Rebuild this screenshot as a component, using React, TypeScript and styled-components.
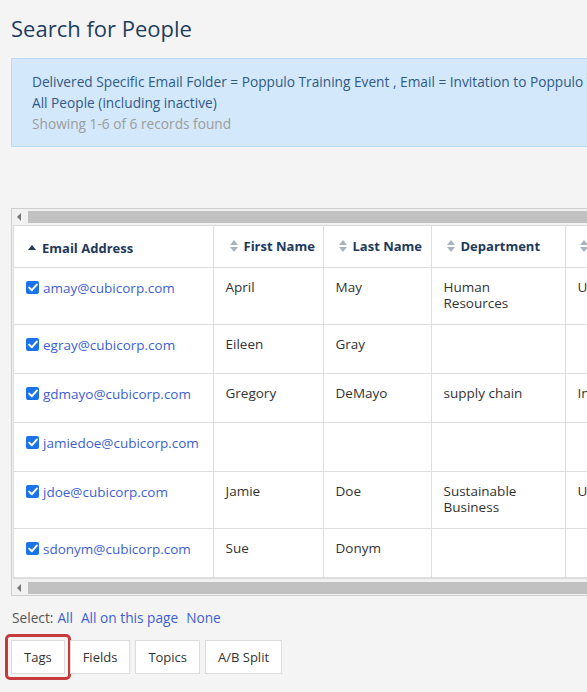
import React from "react";
import styled, { createGlobalStyle } from "styled-components";

const GlobalStyle = createGlobalStyle`
  html, body {
    margin: 0;
    padding: 0;
    background: #f4f4f4;
    overflow: hidden;
  }
  body {
    font-family: "Open Sans", "Noto Sans", sans-serif;
    font-size: 13px;
    color: #333;
  }
`;

const Page = styled.div`
  padding: 13px 0 30px 11px;
  width: 1000px;
`;

const Title = styled.h1`
  margin: 0 0 15px;
  font-size: 22px;
  line-height: 30px;
  font-weight: 400;
  color: #1f3d5e;
`;

const InfoBox = styled.div`
  width: 820px;
  padding: 12px 20px;
  background: #d3e8fb;
  border: 1px solid #b9dcf9;
  line-height: 21px;
  font-size: 13.7px;
  color: #2f5a86;
`;

const InfoMuted = styled.div`
  color: #9c9c9c;
`;

const ScrollArea = styled.div`
  margin-top: 61px;
  width: 880px;
  border: 1px solid #cfcfcf;
  background: #f1f1f1;
`;

const ScrollBar = styled.div`
  height: 15px;
  display: flex;
  align-items: center;
  background: #f1f1f1;
`;

const ScrollArrow = styled.div`
  width: 0;
  height: 0;
  margin: 0 7px 0 5px;
  border-top: 4px solid transparent;
  border-bottom: 4px solid transparent;
  border-right: 4px solid #777;
`;

const ScrollThumb = styled.div`
  flex: 1;
  height: 12px;
  background: #c1c1c1;
`;

const TableFrame = styled.div`
  margin: 1px;
  border: 1px solid #dcdcdc;
  background: #fff;
`;

const Table = styled.table<{ $w: number }>`
  width: ${(p) => p.$w}px;
  border-collapse: collapse;
  table-layout: fixed;
  background: #fff;
`;

const HeadCell = styled.th<{ $pl: number }>`
  height: 41px;
  padding: 0 8px 0 ${(p) => p.$pl}px;
  text-align: left;
  font-weight: 700;
  font-size: 13px;
  color: #1d3a5c;
  border-right: 1px solid #dedede;
  border-bottom: 1px solid #dedede;
  white-space: nowrap;
  overflow: hidden;
`;

const HeadInner = styled.span`
  display: inline-flex;
  align-items: center;
  gap: 6px;
`;

const Row = styled.tr`
  height: 49px;
`;

const Cell = styled.td`
  vertical-align: top;
  padding: 11px 12px 13px 12px;
  line-height: 16px;
  font-size: 13.5px;
  color: #333;
  border-right: 1px solid #dedede;
  border-bottom: 1px solid #dedede;
  overflow: hidden;
  white-space: normal;
`;

const EmailWrap = styled.span`
  display: inline-flex;
  align-items: center;
  gap: 4px;
  white-space: nowrap;
`;

const Check = styled.span`
  display: inline-flex;
  align-items: center;
  justify-content: center;
  width: 13px;
  height: 13px;
  border-radius: 2px;
  background: #1a73e8;
`;

const Link = styled.a`
  color: #3d5fd6;
  text-decoration: none;
  cursor: pointer;
`;

const SelectLine = styled.div`
  margin: 12px 0 0 1px;
  line-height: 20px;
  font-size: 13.7px;
  color: #555;
  display: flex;
  gap: 8px;
`;

const SelectLabel = styled.span`
  margin-right: -4px;
`;

const ButtonRow = styled.div`
  margin-top: 12px;
  display: flex;
  gap: 5px;
`;

const ActionButton = styled.button<{ $marked?: boolean }>`
  position: relative;
  height: 34px;
  padding: 0 12px;
  border: 1px solid #dcdcdc;
  background: #fff;
  font-family: inherit;
  font-size: 13px;
  color: #333;
  cursor: pointer;
  ${(p) =>
    p.$marked &&
    `
    &::after {
      content: "";
      position: absolute;
      inset: -7px;
      border: 3px solid #c43a3d;
      border-radius: 5px;
      pointer-events: none;
    }
  `}
`;

const SortAsc = () => (
  <svg width="8" height="5" viewBox="0 0 8 5">
    <path d="M0 5 L4 0 L8 5 Z" fill="#1d3a5c" />
  </svg>
);

const SortBoth = () => (
  <svg width="8" height="12" viewBox="0 0 8 12">
    <path d="M0 5 L4 0 L8 5 Z" fill="#a7b3c1" />
    <path d="M0 7 L4 12 L8 7 Z" fill="#a7b3c1" />
  </svg>
);

const CheckMark = () => (
  <svg width="10" height="9" viewBox="0 0 10 9">
    <path d="M1.2 4.6 L3.9 7.2 L8.8 1.6" stroke="#fff" strokeWidth="2" fill="none" strokeLinecap="round" strokeLinejoin="round" />
  </svg>
);

interface Person {
  email: string;
  first: string;
  last: string;
  dept: string;
  country: string;
}

const people: Person[] = [
  { email: "amay@cubicorp.com", first: "April", last: "May", dept: "Human Resources", country: "United States" },
  { email: "egray@cubicorp.com", first: "Eileen", last: "Gray", dept: "", country: "" },
  { email: "gdmayo@cubicorp.com", first: "Gregory", last: "DeMayo", dept: "supply chain", country: "India" },
  { email: "jamiedoe@cubicorp.com", first: "", last: "", dept: "", country: "" },
  { email: "jdoe@cubicorp.com", first: "Jamie", last: "Doe", dept: "Sustainable Business", country: "United Kingdom" },
  { email: "sdonym@cubicorp.com", first: "Sue", last: "Donym", dept: "", country: "" },
];

const columns = [
  { label: "Email Address", w: 199, asc: true, pl: 14 },
  { label: "First Name", w: 110, pl: 16 },
  { label: "Last Name", w: 108, pl: 15 },
  { label: "Department", w: 134, pl: 15 },
  { label: "Country", w: 150, pl: 14 },
  { label: "Status", w: 120, pl: 14 },
];

const tableWidth = columns.reduce((s, c) => s + c.w, 0);

export default function App() {
  return (
    <>
      <GlobalStyle />
      <Page>
        <Title>Search for People</Title>
        <InfoBox>
          <div>Delivered Specific Email Folder = Poppulo Training Event , Email = Invitation to Poppulo Training Event</div>
          <div>All People (including inactive)</div>
          <InfoMuted>Showing 1-6 of 6 records found</InfoMuted>
        </InfoBox>

        <ScrollArea>
          <ScrollBar>
            <ScrollArrow />
            <ScrollThumb />
          </ScrollBar>
          <TableFrame>
            <Table $w={tableWidth}>
              <colgroup>
                {columns.map((c) => (
                  <col key={c.label} style={{ width: c.w }} />
                ))}
              </colgroup>
              <thead>
                <tr>
                  {columns.map((c) => (
                    <HeadCell key={c.label} $pl={c.pl}>
                      <HeadInner>
                        {c.asc ? <SortAsc /> : <SortBoth />}
                        {c.label}
                      </HeadInner>
                    </HeadCell>
                  ))}
                </tr>
              </thead>
              <tbody>
                {people.map((p) => (
                  <Row key={p.email}>
                    <Cell>
                      <EmailWrap>
                        <Check>
                          <CheckMark />
                        </Check>
                        <Link>{p.email}</Link>
                      </EmailWrap>
                    </Cell>
                    <Cell>{p.first}</Cell>
                    <Cell>{p.last}</Cell>
                    <Cell>{p.dept}</Cell>
                    <Cell>{p.country}</Cell>
                    <Cell>Active</Cell>
                  </Row>
                ))}
              </tbody>
            </Table>
          </TableFrame>
          <ScrollBar>
            <ScrollArrow />
            <ScrollThumb />
          </ScrollBar>
        </ScrollArea>

        <SelectLine>
          <SelectLabel>Select:</SelectLabel>
          <Link>All</Link>
          <Link>All on this page</Link>
          <Link>None</Link>
        </SelectLine>

        <ButtonRow>
          <ActionButton $marked>Tags</ActionButton>
          <ActionButton>Fields</ActionButton>
          <ActionButton>Topics</ActionButton>
          <ActionButton>A/B Split</ActionButton>
        </ButtonRow>
      </Page>
    </>
  );
}
